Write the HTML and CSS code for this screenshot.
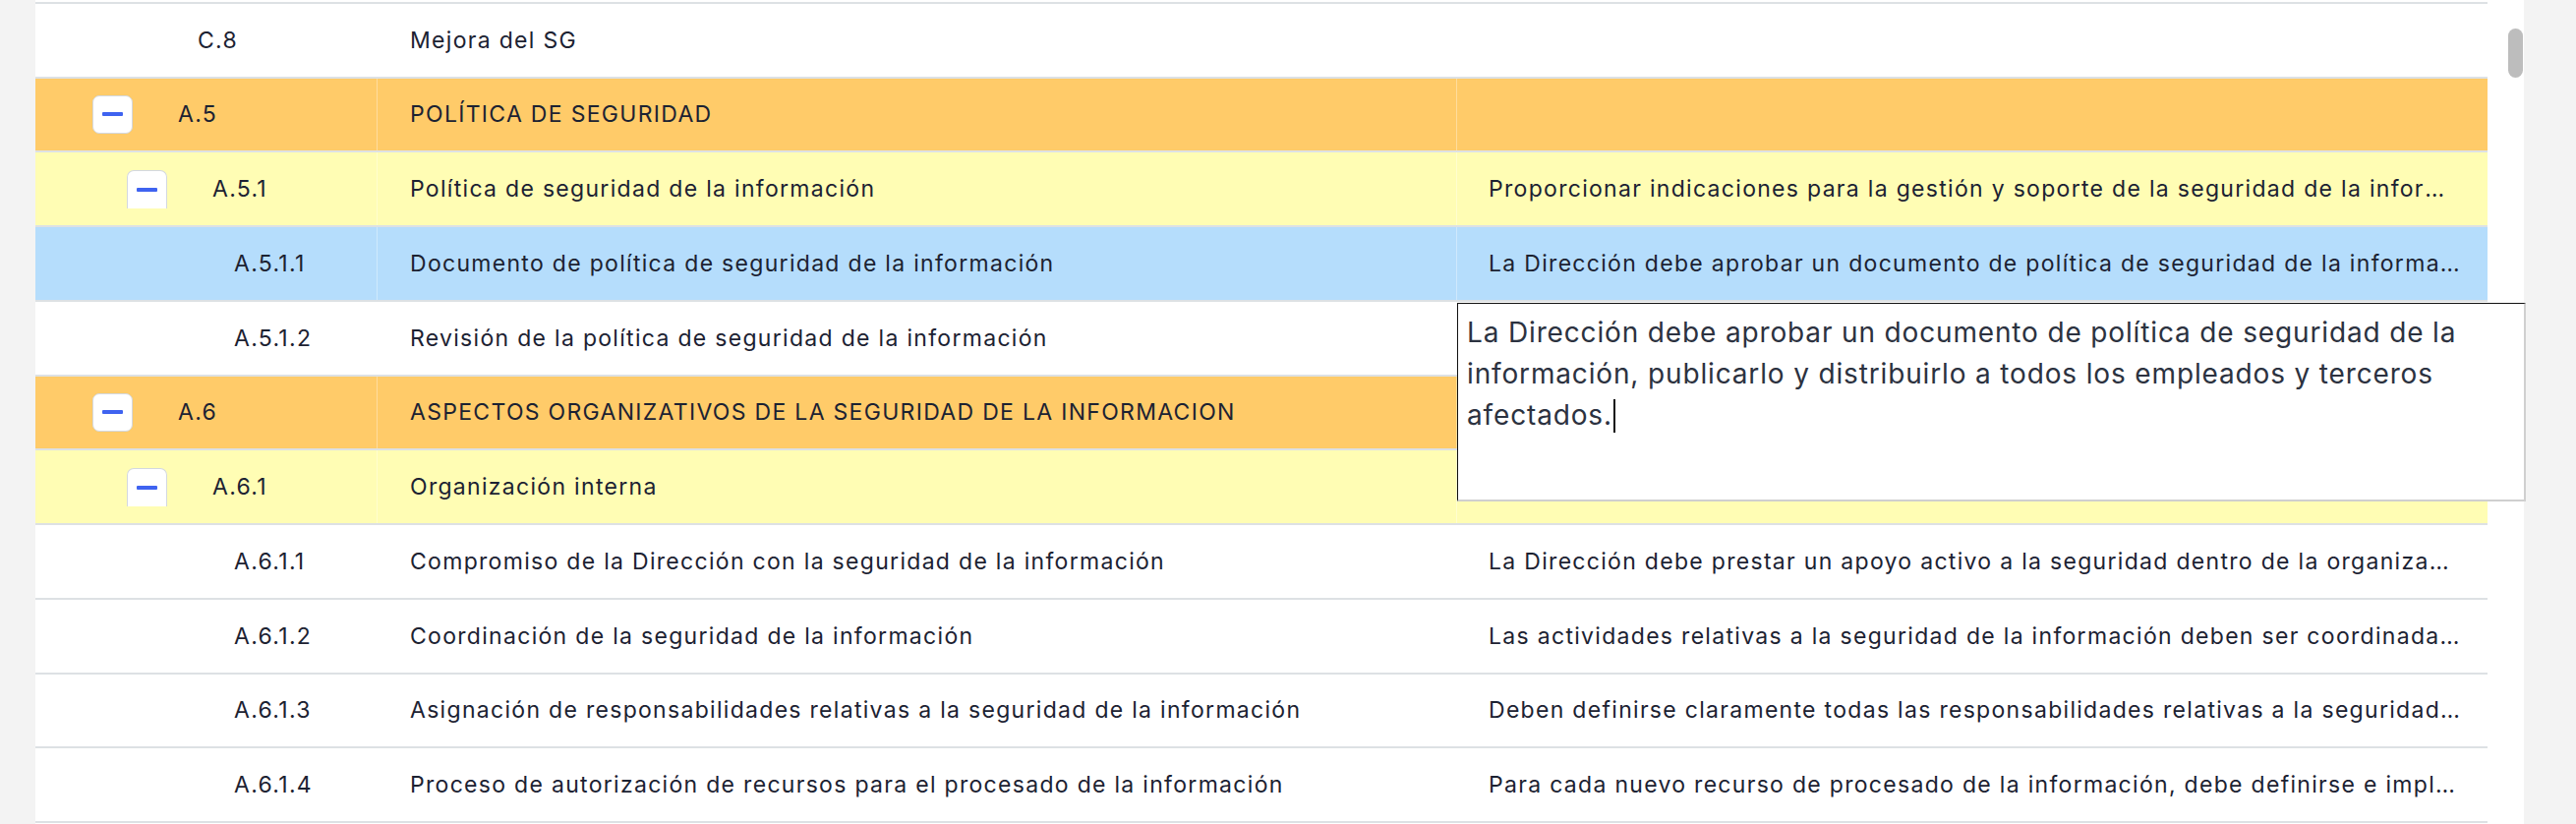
FILE: index.html
```html
<!DOCTYPE html>
<html lang="es">
<head>
  <meta charset="UTF-8" />
  <title>Controles ISO 27002</title>
  <link rel="stylesheet" href="styles.css">
</head>
<body>

<div class="page">
  <div class="panel">
    <div class="tree">
      <!-- row scrolled out of view, only its bottom edge shows -->
      <div class="row prev">
        <div class="cell code leaf-1">C.7</div>
        <div class="cell name">Evaluación del desempeño</div>
        <div class="cell desc"></div>
      </div>

      <div class="row">
        <div class="cell code leaf-1">C.8</div>
        <div class="cell name">Mejora del SG</div>
        <div class="cell desc"></div>
      </div>

      <div class="row domain">
        <div class="cell code lvl-0"><button class="toggle"><span class="minus"></span></button>A.5</div>
        <div class="cell name">POLÍTICA DE SEGURIDAD</div>
        <div class="cell desc"></div>
      </div>

      <div class="row objective">
        <div class="cell code lvl-1"><button class="toggle cut"><span class="minus"></span></button>A.5.1</div>
        <div class="cell name">Política de seguridad de la información</div>
        <div class="cell desc"><span>Proporcionar indicaciones para la gestión y soporte de la seguridad de la información de acuerdo con los requisitos del negocio y con la legislación y las normativas aplicables.</span></div>
      </div>

      <div class="row selected">
        <div class="cell code leaf-2">A.5.1.1</div>
        <div class="cell name">Documento de política de seguridad de la información</div>
        <div class="cell desc"><span>La Dirección debe aprobar un documento de política de seguridad de la información, publicarlo y distribuirlo a todos los empleados y terceros afectados.</span></div>
      </div>

      <div class="row">
        <div class="cell code leaf-2">A.5.1.2</div>
        <div class="cell name">Revisión de la política de seguridad de la información</div>
        <div class="cell desc"><span>La política de seguridad de la información debe ser revisada a intervalos planificados o siempre que se produzcan cambios significativos.</span></div>
      </div>

      <div class="row domain">
        <div class="cell code lvl-0"><button class="toggle"><span class="minus"></span></button>A.6</div>
        <div class="cell name">ASPECTOS ORGANIZATIVOS DE LA SEGURIDAD DE LA INFORMACION</div>
        <div class="cell desc"></div>
      </div>

      <div class="row objective">
        <div class="cell code lvl-1"><button class="toggle cut"><span class="minus"></span></button>A.6.1</div>
        <div class="cell name">Organización interna</div>
        <div class="cell desc"><span>Gestionar la seguridad de la información dentro de la Organización.</span></div>
      </div>

      <div class="row">
        <div class="cell code leaf-2">A.6.1.1</div>
        <div class="cell name">Compromiso de la Dirección con la seguridad de la información</div>
        <div class="cell desc"><span>La Dirección debe prestar un apoyo activo a la seguridad dentro de la organización a través de directrices claras, un compromiso demostrado y asignaciones explícitas.</span></div>
      </div>

      <div class="row">
        <div class="cell code leaf-2">A.6.1.2</div>
        <div class="cell name">Coordinación de la seguridad de la información</div>
        <div class="cell desc"><span>Las actividades relativas a la seguridad de la información deben ser coordinadas entre los representantes de las diferentes partes de la organización.</span></div>
      </div>

      <div class="row">
        <div class="cell code leaf-2">A.6.1.3</div>
        <div class="cell name">Asignación de responsabilidades relativas a la seguridad de la información</div>
        <div class="cell desc"><span>Deben definirse claramente todas las responsabilidades relativas a la seguridad de la información.</span></div>
      </div>

      <div class="row">
        <div class="cell code leaf-2">A.6.1.4</div>
        <div class="cell name">Proceso de autorización de recursos para el procesado de la información</div>
        <div class="cell desc"><span>Para cada nuevo recurso de procesado de la información, debe definirse e implantarse un proceso de autorización por parte de la Dirección.</span></div>
      </div>

      <div class="row">
        <div class="cell code leaf-2">A.6.1.5</div>
        <div class="cell name">Acuerdos de confidencialidad</div>
        <div class="cell desc"><span>Deben identificarse y revisarse regularmente los requisitos de confidencialidad.</span></div>
      </div>
    </div>

    <div class="scroll-track"><div class="scroll-thumb"></div></div>
  </div>

  <!-- inline editor for the selected row's description -->
  <div class="editor">La Dirección debe aprobar un documento de política de seguridad de la<br>información, publicarlo y distribuirlo a todos los empleados y terceros<br>afectados.<span class="caret"></span></div>
</div>

</body>
</html>
```

FILE: styles.css
```css
html, body {
  margin: 0;
  height: 100%;
  overflow: hidden;
}

body {
  background: #f3f3f3;
  font-family: 'Inter', 'Noto Sans', sans-serif;
  color: #1c2232;
}

.page {
  position: relative;
  height: 838px;
}

.panel {
  display: flex;
  margin-left: 36px;
  width: 2531px;
  height: 838px;
  background: #fff;
  overflow: hidden;
}

.tree {
  width: 2494px;
  margin-top: -72px;
}

.row {
  display: grid;
  grid-template-columns: 348px 1098px 1048px;
  height: 75.75px;
  box-sizing: border-box;
  border-bottom: 2px solid #dde1e4;
  background: #fff;
}

.row.domain    { background: #ffcb69; }
.row.objective { background: #fffdb4; }
.row.selected  { background: #b5ddfc; }

.cell {
  display: flex;
  align-items: center;
  min-width: 0;
  border-right: 1px solid rgba(255,255,255,0.35);
  font-size: 23px;
  letter-spacing: 1.3px;
  white-space: nowrap;
}

.cell:last-child {
  border-right: none;
}

.name {
  padding: 0 33px;
}

.desc {
  padding: 0 28px 0 32px;
}

.desc span {
  overflow: hidden;
  text-overflow: ellipsis;
}

/* tree indentation of the code column */
.code.lvl-0  { padding-left: 58px; }
.code.lvl-1  { padding-left: 93px; }
.code.leaf-1 { padding-left: 165px; }
.code.leaf-2 { padding-left: 202px; }

.toggle {
  display: flex;
  align-items: center;
  justify-content: center;
  flex: none;
  width: 41px;
  height: 39px;
  margin-right: 46px;
  padding: 0;
  background: #fff;
  border: 1px solid #d3d8df;
  border-radius: 7px;
  cursor: pointer;
}

.toggle.cut {
  border-bottom: none;
  border-bottom-left-radius: 0;
  border-bottom-right-radius: 0;
}

.minus {
  width: 21px;
  height: 4px;
  border-radius: 1px;
  background: #3f63f0;
}

.scroll-track {
  flex: 1;
  padding: 29px 1px 0 21px;
}

.scroll-thumb {
  width: 15px;
  height: 50px;
  border-radius: 8px;
  background: #bdbdbd;
}

.editor {
  position: absolute;
  left: 1482px;
  top: 308px;
  width: 1087px;
  height: 202px;
  box-sizing: border-box;
  padding: 8px 9px;
  background: #fff;
  border: 1px solid #111;
  border-right: 2px solid #cfcfcf;
  border-bottom: 2px solid #cfcfcf;
  font-size: 28px;
  letter-spacing: 0.85px;
  line-height: 42px;
  color: #2c3240;
  white-space: nowrap;
}

.caret {
  display: inline-block;
  width: 2px;
  height: 34px;
  margin-left: 1px;
  vertical-align: -8px;
  background: #111;
}
```
